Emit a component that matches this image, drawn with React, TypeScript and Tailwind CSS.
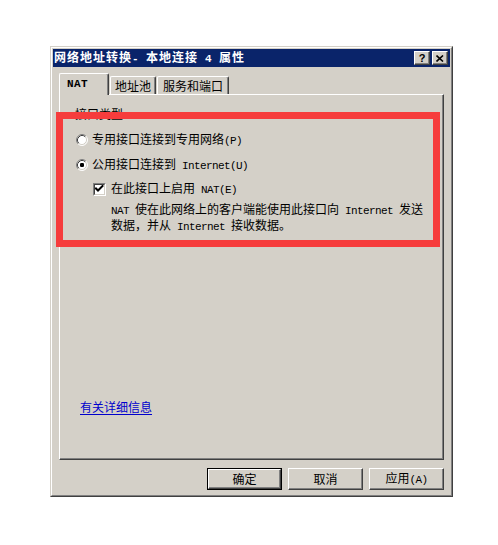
import type { ReactNode } from "react";

// half-width latin, matches the 6px cell of the classic 12px CJK system font
const L = ({ children, bold }: { children: ReactNode; bold?: boolean }) => (
  <span
    className={
      bold
        ? "font-['Liberation_Mono',monospace] text-[11px] font-bold tracking-[0.4px]"
        : "font-['Liberation_Mono',monospace] text-[11px] tracking-[-0.6px]"
    }
  >
    {children}
  </span>
);

const Radio = ({ checked }: { checked?: boolean }) => (
  <svg width="12" height="12" viewBox="0 0 12 12" className="shrink-0">
    <circle cx="6" cy="6" r="5" fill="#fff" />
    <path d="M2.11 9.89 A5.5 5.5 0 0 1 9.89 2.11" fill="none" stroke="#808080" strokeWidth="1" />
    <path d="M9.89 2.11 A5.5 5.5 0 0 1 2.11 9.89" fill="none" stroke="#fff" strokeWidth="1" />
    <path d="M2.82 9.18 A4.5 4.5 0 0 1 9.18 2.82" fill="none" stroke="#404040" strokeWidth="1" />
    <path d="M9.18 2.82 A4.5 4.5 0 0 1 2.82 9.18" fill="none" stroke="#d4d0c8" strokeWidth="1" />
    {checked && <rect x="4" y="4" width="4" height="4" rx="1.2" fill="#000" />}
  </svg>
);

const Checkbox = ({ checked }: { checked?: boolean }) => (
  <div className="w-[13px] h-[13px] shrink-0 border border-t-[#808080] border-l-[#808080] border-r-white border-b-white">
    <div className="w-full h-full border border-t-[#404040] border-l-[#404040] border-r-[#d4d0c8] border-b-[#d4d0c8] bg-white">
      {checked && (
        <svg width="9" height="9" viewBox="0 0 9 9" className="block">
          <path d="M1 3.5 L3 5.5 L7.5 1" fill="none" stroke="#000" strokeWidth="2" strokeLinecap="square" />
        </svg>
      )}
    </div>
  </div>
);

const TitleButton = ({ children }: { children: ReactNode }) => (
  <div className="w-[16px] h-[14px] bg-[#d4d0c8] border border-t-white border-l-white border-r-[#404040] border-b-[#404040] shadow-[inset_-1px_-1px_0_#808080] flex items-center justify-center">
    {children}
  </div>
);

const Button = ({ children, primary }: { children: ReactNode; primary?: boolean }) => (
  <div className={primary ? "w-[75px] h-[22px] border border-black" : "w-[75px] h-[22px]"}>
    <div className="w-full h-full border border-t-white border-l-white border-r-[#404040] border-b-[#404040] shadow-[inset_-1px_-1px_0_#808080] flex items-center justify-center">
      {children}
    </div>
  </div>
);

export default function App() {
  return (
    <div className="relative min-h-[545px] bg-white pl-[50px] pt-[46px] font-['Noto_Sans_CJK_SC',sans-serif] text-[12px] leading-[12px] text-black">
      <div className="w-[403px] h-[451px] bg-[#d4d0c8] border border-t-[#d4d0c8] border-l-[#d4d0c8] border-r-[#404040] border-b-[#404040]">
        <div className="h-full p-px flex flex-col border border-t-white border-l-white border-r-[#808080] border-b-[#808080]">
          {/* title bar */}
          <div className="h-[18px] bg-[#0a246a] flex items-center pl-[1px] pr-[2px]">
            <span className="text-white font-bold tracking-[1px] leading-[14px]">
              网络地址转换<L bold>- </L>本地连接<L bold> 4 </L>属性
            </span>
            <div className="ml-auto flex gap-[2px]">
              <TitleButton>
                <span className="font-['Liberation_Sans',sans-serif] text-[11px] font-bold leading-[11px]">?</span>
              </TitleButton>
              <TitleButton>
                <svg width="8" height="7" viewBox="0 0 8 7">
                  <path d="M0.5 0.5 L7 6.5 M7 0.5 L0.5 6.5" stroke="#000" strokeWidth="1.6" />
                </svg>
              </TitleButton>
            </div>
          </div>

          <div className="px-[6px] pt-[6px] flex flex-col">
            {/* tabs */}
            <div className="relative z-10 h-[21px] flex items-end">
              <div className="w-[50px] h-[22px] mb-[-1px] bg-[#d4d0c8] border-l border-t border-l-white border-t-white border-r border-r-[#404040] shadow-[inset_-1px_0_0_#808080] rounded-t-[2px] flex items-center pl-[7px] pb-[1px]">
                <L bold>NAT</L>
              </div>
              <div className="w-[46px] h-[18px] ml-[1px] border-l border-t border-l-white border-t-white border-r border-r-[#404040] shadow-[inset_-1px_0_0_#808080] rounded-t-[2px] flex items-center justify-center">
                地址池
              </div>
              <div className="w-[72px] h-[18px] ml-[1px] border-l border-t border-l-white border-t-white border-r border-r-[#404040] shadow-[inset_-1px_0_0_#808080] rounded-t-[2px] flex items-center justify-center">
                服务和端口
              </div>
            </div>

            {/* panel */}
            <div className="h-[366px] border border-t-white border-l-white border-r-[#404040] border-b-[#404040] shadow-[inset_-1px_-1px_0_#808080] flex flex-col">
              <div className="ml-[15px] mt-[13px]">接口类型:</div>

              <div className="ml-[16px] mt-[13px] flex items-center gap-[4px]">
                <Radio />
                <span>
                  专用接口连接到专用网络<L>(P)</L>
                </span>
              </div>
              <div className="ml-[16px] mt-[11px] flex items-center gap-[4px]">
                <Radio checked />
                <span>
                  公用接口连接到<L> Internet(U)</L>
                </span>
              </div>
              <div className="ml-[33px] mt-[10px] flex items-center gap-[5px]">
                <Checkbox checked />
                <span>
                  在此接口上启用<L> NAT(E)</L>
                </span>
              </div>
              <div className="ml-[51px] mt-[6px] leading-[13px]">
                <div>
                  <L>NAT </L>使在此网络上的客户端能使用此接口向<L> Internet </L>发送
                </div>
                <div>
                  数据，并从<L> Internet </L>接收数据。
                </div>
              </div>

              <a href="#" className="ml-[20px] mt-[167px] w-fit text-[#0000cc] underline underline-offset-2">
                有关详细信息
              </a>
            </div>

            {/* buttons */}
            <div className="mt-[8px] flex justify-end gap-[6px]">
              <Button primary>确定</Button>
              <Button>取消</Button>
              <Button>
                <span>
                  应用<L>(A)</L>
                </span>
              </Button>
            </div>
          </div>
        </div>
      </div>

      {/* red highlight annotation */}
      <div className="absolute left-[56px] top-[112px] w-[384px] h-[135px] border-[7px] border-[#f63c3c]" />
    </div>
  );
}
